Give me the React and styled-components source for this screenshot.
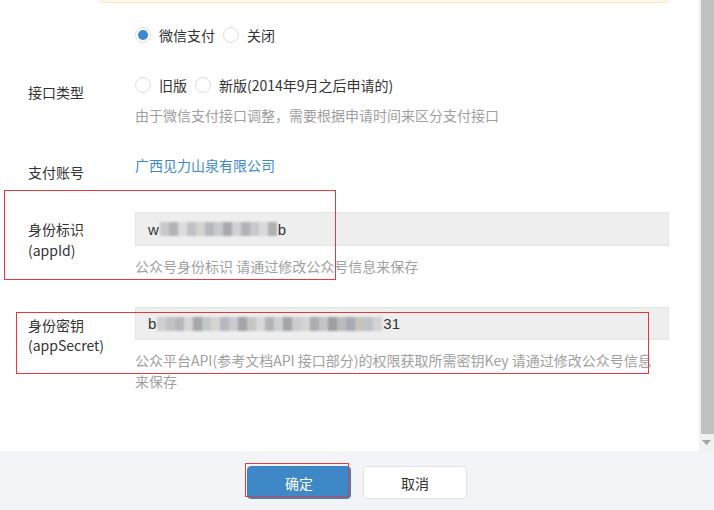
import React from "react";
import styled, { createGlobalStyle } from "styled-components";

const GlobalStyle = createGlobalStyle`
    html, body {
        margin: 0;
        padding: 0;
        background: #ffffff;
    }
    body {
        font-family: "Noto Sans CJK SC", "Noto Sans", "Liberation Sans", sans-serif;
        font-size: 14px;
        color: #333333;
    }
`;

const mosaicA = ["#c9c9cb", "#b4b2b6", "#dcdcdc", "#c2c0c4", "#d4d2d0", "#b6b8bc", "#c8cacd", "#a9a8ad", "#d0d1d4", "#b3b1b6", "#c7c8cc", "#d9d9db", "#b0b0b4"];
const mosaicB = ["#cfcfd1", "#c1c2c5", "#b7b6ba", "#d7d5d6", "#a7a6ab", "#c3c7c8", "#d6d4d4", "#b9b8c0", "#cacbce", "#a3a3aa", "#c5c6c2", "#d8d8da", "#b2b4b8", "#cdcfd0", "#a5a4a8", "#cbcbcd", "#d5d4d4", "#ababb1", "#c4c3c6", "#9f9d9f", "#b8bdbb", "#a9a8b6", "#c7c3bd", "#bfc3c6", "#d3d3d5"];

const Mosaic = ({ colors }) => (
    <MosaicStrip>
        {colors.map((c, i) => (
            <MosaicCell key={i} style={{ background: c }} />
        ))}
    </MosaicStrip>
);

const Radio = ({ checked, children }) => (
    <RadioOption>
        <RadioCircle $checked={checked} />
        <span>{children}</span>
    </RadioOption>
);

const App = () => (
    <Page>
        <GlobalStyle />
        <Main>
            <Content>
                <Notice />

                <FormRow $mt={22}>
                    <Label />
                    <Control>
                        <RadioGroup>
                            <Radio checked>微信支付</Radio>
                            <Radio>关闭</Radio>
                        </RadioGroup>
                    </Control>
                </FormRow>

                <FormRow $mt={30}>
                    <Label $pt={7}>接口类型</Label>
                    <Control>
                        <RadioGroup>
                            <Radio>旧版</Radio>
                            <Radio>新版(2014年9月之后申请的)</Radio>
                        </RadioGroup>
                        <Hint>由于微信支付接口调整，需要根据申请时间来区分支付接口</Hint>
                    </Control>
                </FormRow>

                <FormRow $mt={30}>
                    <Label $pt={7}>支付账号</Label>
                    <Control>
                        <LinkText>广西见力山泉有限公司</LinkText>
                    </Control>
                </FormRow>

                <FormRow $mt={30}>
                    <Label $pt={7} $lh={21}>身份标识<br />(appId)</Label>
                    <Control>
                        <ReadOnlyInput>
                            w<Mosaic colors={mosaicA} />b
                        </ReadOnlyInput>
                        <Hint>公众号身份标识 请通过修改公众号信息来保存</Hint>
                    </Control>
                </FormRow>

                <FormRow $mt={31}>
                    <Label $pt={8} $lh={20}>身份密钥<br />(appSecret)</Label>
                    <Control>
                        <ReadOnlyInput $h={33}>
                            b<Mosaic colors={mosaicB} />31
                        </ReadOnlyInput>
                        <Hint $lh={21} $mt={10} $w={520}>
                            公众平台API(参考文档API 接口部分)的权限获取所需密钥Key 请通过修改公众号信息来保存
                        </Hint>
                    </Control>
                </FormRow>

                <Annotation style={{ left: 4, top: 190, width: 330, height: 88 }} />
                <Annotation style={{ left: 16, top: 312, width: 631, height: 60 }} />
            </Content>
            <Scrollbar>
                <Thumb />
                <ArrowButton>
                    <svg width="9" height="6" viewBox="0 0 9 6">
                        <path d="M0 0 H9 L4.5 5 Z" fill="#a3a3a3" />
                    </svg>
                </ArrowButton>
            </Scrollbar>
        </Main>
        <Footer>
            <PrimaryButton>
                确定
                <ButtonMark />
            </PrimaryButton>
            <SecondaryButton>取消</SecondaryButton>
        </Footer>
    </Page>
);

export default App;

const Page = styled.div`
    width: 714px;
    height: 510px;
    display: flex;
    flex-direction: column;
    overflow: hidden;
`;

const Main = styled.div`
    display: flex;
    height: 451px;
    flex-shrink: 0;
`;

const Content = styled.div`
    position: relative;
    flex: 1;
    overflow: hidden;
    background: #ffffff;
`;

const Notice = styled.div`
    margin: -37px 0 0 99px;
    width: 568px;
    height: 38px;
    background: #fdf8e7;
    border: 1px solid #f8e8c2;
    border-radius: 0 0 4px 4px;
`;

const FormRow = styled.div`
    display: flex;
    align-items: flex-start;
    margin-top: ${p => p.$mt || 0}px;
`;

const Label = styled.div`
    width: 107px;
    padding-left: 28px;
    padding-top: ${p => p.$pt || 0}px;
    line-height: ${p => p.$lh || 20}px;
    color: #333333;
    flex-shrink: 0;
`;

const Control = styled.div`
    width: 534px;
    display: flex;
    flex-direction: column;
`;

const RadioGroup = styled.div`
    display: flex;
    align-items: center;
    gap: 8px;
    height: 20px;
`;

const RadioOption = styled.label`
    display: flex;
    align-items: center;
    gap: 8px;
    line-height: 20px;
    color: #333333;
`;

const RadioCircle = styled.span`
    width: 16px;
    height: 16px;
    box-sizing: border-box;
    border-radius: 50%;
    border: 1px solid #dedede;
    background: #ffffff;
    position: relative;

    &::after {
        content: "";
        display: ${p => (p.$checked ? "block" : "none")};
        position: absolute;
        left: 2px;
        top: 2px;
        width: 10px;
        height: 10px;
        border-radius: 50%;
        background: #3f87cf;
    }
`;

const Hint = styled.div`
    margin-top: ${p => (p.$mt !== undefined ? p.$mt : 10)}px;
    line-height: ${p => p.$lh || 20}px;
    color: #a0a0a0;
    width: ${p => p.$w || 534}px;
`;

const LinkText = styled.a`
    line-height: 20px;
    color: #3d8ad0;
    cursor: pointer;
`;

const ReadOnlyInput = styled.div`
    height: ${p => p.$h || 34}px;
    box-sizing: border-box;
    display: flex;
    align-items: center;
    padding-left: 12px;
    background: #eeeeee;
    border: 1px solid #e4e4e4;
    color: #333333;
    font-family: "Liberation Sans", "Noto Sans", sans-serif;
    font-size: 15px;
`;

const MosaicStrip = styled.span`
    display: flex;
    height: 14px;
    margin: 0 1px;
    filter: blur(1.1px);
`;

const MosaicCell = styled.span`
    width: 9px;
    height: 14px;
`;

const Annotation = styled.div`
    position: absolute;
    border: 1px solid #e8383d;
    pointer-events: none;
`;

const Scrollbar = styled.div`
    width: 15px;
    display: flex;
    flex-direction: column;
    background: #f1f1f1;
    padding-left: 2px;
    box-sizing: border-box;
`;

const Thumb = styled.div`
    height: 434px;
    background: #c1c1c1;
`;

const ArrowButton = styled.div`
    flex: 1;
    display: flex;
    align-items: center;
    justify-content: center;
    margin-left: -2px;
`;

const Footer = styled.div`
    flex: 1;
    background: #f3f4f8;
    display: flex;
    justify-content: center;
    align-items: flex-start;
    gap: 12px;
    padding-top: 15px;
`;

const BaseButton = styled.button`
    width: 104px;
    height: 33px;
    border-radius: 4px;
    font-family: "Noto Sans CJK SC", "Noto Sans", sans-serif;
    font-size: 14px;
    cursor: pointer;
    position: relative;
`;

const PrimaryButton = styled(BaseButton)`
    background: #3f88c8;
    border: 1px solid #3b82c0;
    color: #ffffff;
`;

const SecondaryButton = styled(BaseButton)`
    background: #ffffff;
    border: 1px solid #e1e3e8;
    color: #333333;
`;

const ButtonMark = styled.span`
    position: absolute;
    left: -3px;
    top: -4px;
    width: 102px;
    height: 32px;
    border: 1px solid #e8383d;
    pointer-events: none;
`;
